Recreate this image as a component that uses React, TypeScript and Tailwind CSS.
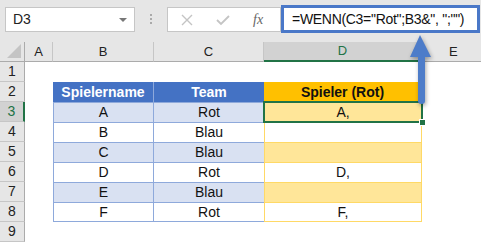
import React from 'react';

const rows = [
  { name: 'A', team: 'Rot', out: 'A,' },
  { name: 'B', team: 'Blau', out: '' },
  { name: 'C', team: 'Blau', out: '' },
  { name: 'D', team: 'Rot', out: 'D,' },
  { name: 'E', team: 'Blau', out: '' },
  { name: 'F', team: 'Rot', out: 'F,' },
];

const RowHead: React.FC<{ n: number; active?: boolean }> = ({ n, active }) => (
  <div
    className={
      active
        ? 'h-[20px] flex items-center justify-center bg-[#d2d2d2] border-b border-[#c6c6c6] border-r-2 border-r-[#217346] text-[#217346] text-[14px]'
        : 'h-[20px] flex items-center justify-center bg-[#e6e6e6] border-b border-[#c6c6c6] border-r border-r-[#ababab] text-[#222] text-[14px]'
    }
  >
    {n}
  </div>
);

export default function App() {
  return (
    <div className="relative w-[481px] h-[243px] bg-white overflow-hidden font-['Liberation_Sans',sans-serif]">
      {/* formula bar */}
      <div className="h-[42px] bg-[#e6e6e6] flex items-start">
        <div className="ml-[5px] mt-[7px] w-[130px] h-[25px] bg-white border border-[#c6c6c6] flex items-center justify-between pl-[7px] pr-[7px]">
          <span className="text-[14px] text-[#222]">D3</span>
          <span className="w-0 h-0 border-l-[4px] border-r-[4px] border-t-[4px] border-l-transparent border-r-transparent border-t-[#777]" />
        </div>
        <div className="w-[32px] mt-[14px] flex flex-col items-center gap-[2px]">
          <span className="w-[2px] h-[2px] bg-[#aaa]" />
          <span className="w-[2px] h-[2px] bg-[#aaa]" />
          <span className="w-[2px] h-[2px] bg-[#aaa]" />
        </div>
        <div className="mt-[7px] w-[114px] h-[25px] bg-white border border-[#c6c6c6] flex items-center">
          <svg width="12" height="12" viewBox="0 0 12 12" className="ml-[13px]">
            <path d="M1 1 L11 11 M11 1 L1 11" stroke="#c4c4c4" strokeWidth="1.4" />
          </svg>
          <svg width="14" height="12" viewBox="0 0 14 12" className="ml-[23px]">
            <path d="M1 6 L5 10 L13 2" stroke="#c4c4c4" strokeWidth="1.8" fill="none" />
          </svg>
          <span className="ml-[23px] italic font-['Liberation_Serif',serif] text-[14px] text-[#666]">fx</span>
        </div>
        <div className="mt-[5px] w-[199px] h-[28px] bg-white border-[3px] border-[#4a78c8] flex items-center pl-[8px] text-[14px] tracking-[-0.3px] text-[#111] whitespace-nowrap overflow-hidden">
          =WENN(C3="Rot";B3&", ";"")
        </div>
      </div>

      {/* grid */}
      <div className="grid grid-cols-[25px_28px_101px_110px_158px_1fr]">
        {/* column headers */}
        <div className="h-[20px] bg-[#e6e6e6] border-r border-b border-[#ababab] relative">
          <svg width="14" height="14" viewBox="0 0 14 14" className="absolute right-[3px] bottom-[3px]">
            <path d="M14 0 L14 14 L0 14 Z" fill="#c4c4c4" />
          </svg>
        </div>
        {['A', 'B', 'C'].map((c) => (
          <div key={c} className="h-[20px] bg-[#e6e6e6] border-r border-[#c6c6c6] border-b border-b-[#ababab] flex items-center justify-center text-[13px] text-[#222]">
            {c}
          </div>
        ))}
        <div className="h-[20px] bg-[#d2d2d2] border-r border-[#c6c6c6] border-b-2 border-b-[#217346] flex items-center justify-center text-[13px] text-[#217346]">
          D
        </div>
        <div className="h-[20px] bg-[#e6e6e6] border-b border-[#ababab] flex items-center pl-[27px] text-[13px] text-[#222]">
          E
        </div>

        {/* row 1 */}
        <RowHead n={1} />
        <div className="col-span-5 h-[20px]" />

        {/* row 2: table header */}
        <RowHead n={2} />
        <div className="h-[20px]" />
        <div className="h-[20px] bg-[#4472c4] border-r border-[#8ea9db] flex items-center justify-center text-white font-bold text-[14px]">
          Spielername
        </div>
        <div className="h-[20px] bg-[#4472c4] flex items-center justify-center text-white font-bold text-[14px]">
          Team
        </div>
        <div className="h-[20px] bg-[#ffc000] border-r border-[#ffd966] flex items-center justify-center text-[#111] font-bold text-[14px]">
          Spieler (Rot)
        </div>
        <div className="h-[20px]" />

        {rows.map((r, i) => {
          const odd = i % 2 === 0;
          return (
            <React.Fragment key={r.name}>
              <RowHead n={i + 3} active={i === 0} />
              <div className="h-[20px]" />
              <div className={(odd ? 'bg-[#d9e1f2] ' : 'bg-white ') + 'h-[20px] border-l border-r border-t border-[#8ea9db] flex items-center justify-center text-[14px] text-[#111]' + (i === 5 ? ' border-b' : '')}>
                {r.name}
              </div>
              <div className={(odd ? 'bg-[#d9e1f2] ' : 'bg-white ') + 'h-[20px] border-t border-[#8ea9db] flex items-center justify-center text-[14px] text-[#111]' + (i === 5 ? ' border-b' : '')}>
                {r.team}
              </div>
              <div className={(odd ? 'bg-[#ffe699] ' : 'bg-white ') + 'h-[20px] border-l border-r border-t border-[#ffd966] flex items-center justify-center text-[14px] text-[#111]' + (i === 5 ? ' border-b' : '')}>
                {r.out}
              </div>
              <div className="h-[20px]" />
            </React.Fragment>
          );
        })}

        <RowHead n={9} />
        <div className="col-span-5 h-[20px]" />
      </div>

      {/* selection on D3 */}
      <div className="absolute left-[263px] top-[101px] w-[160px] h-[22px] border-2 border-[#217346]" />
      <div className="absolute left-[419px] top-[119px] w-[7px] h-[7px] bg-[#217346] border border-white" />

      {/* arrow */}
      <svg width="30" height="80" viewBox="0 0 30 80" className="absolute left-[406px] top-[33px] drop-shadow-[1px_2px_2px_rgba(0,0,0,0.35)]">
        <path d="M14 2 L4 24 L12 24 L12 68 Q12 71 15.5 71 Q19 71 19 68 L19 24 L25 24 Z" fill="#4d7cc9" />
      </svg>
    </div>
  );
}
